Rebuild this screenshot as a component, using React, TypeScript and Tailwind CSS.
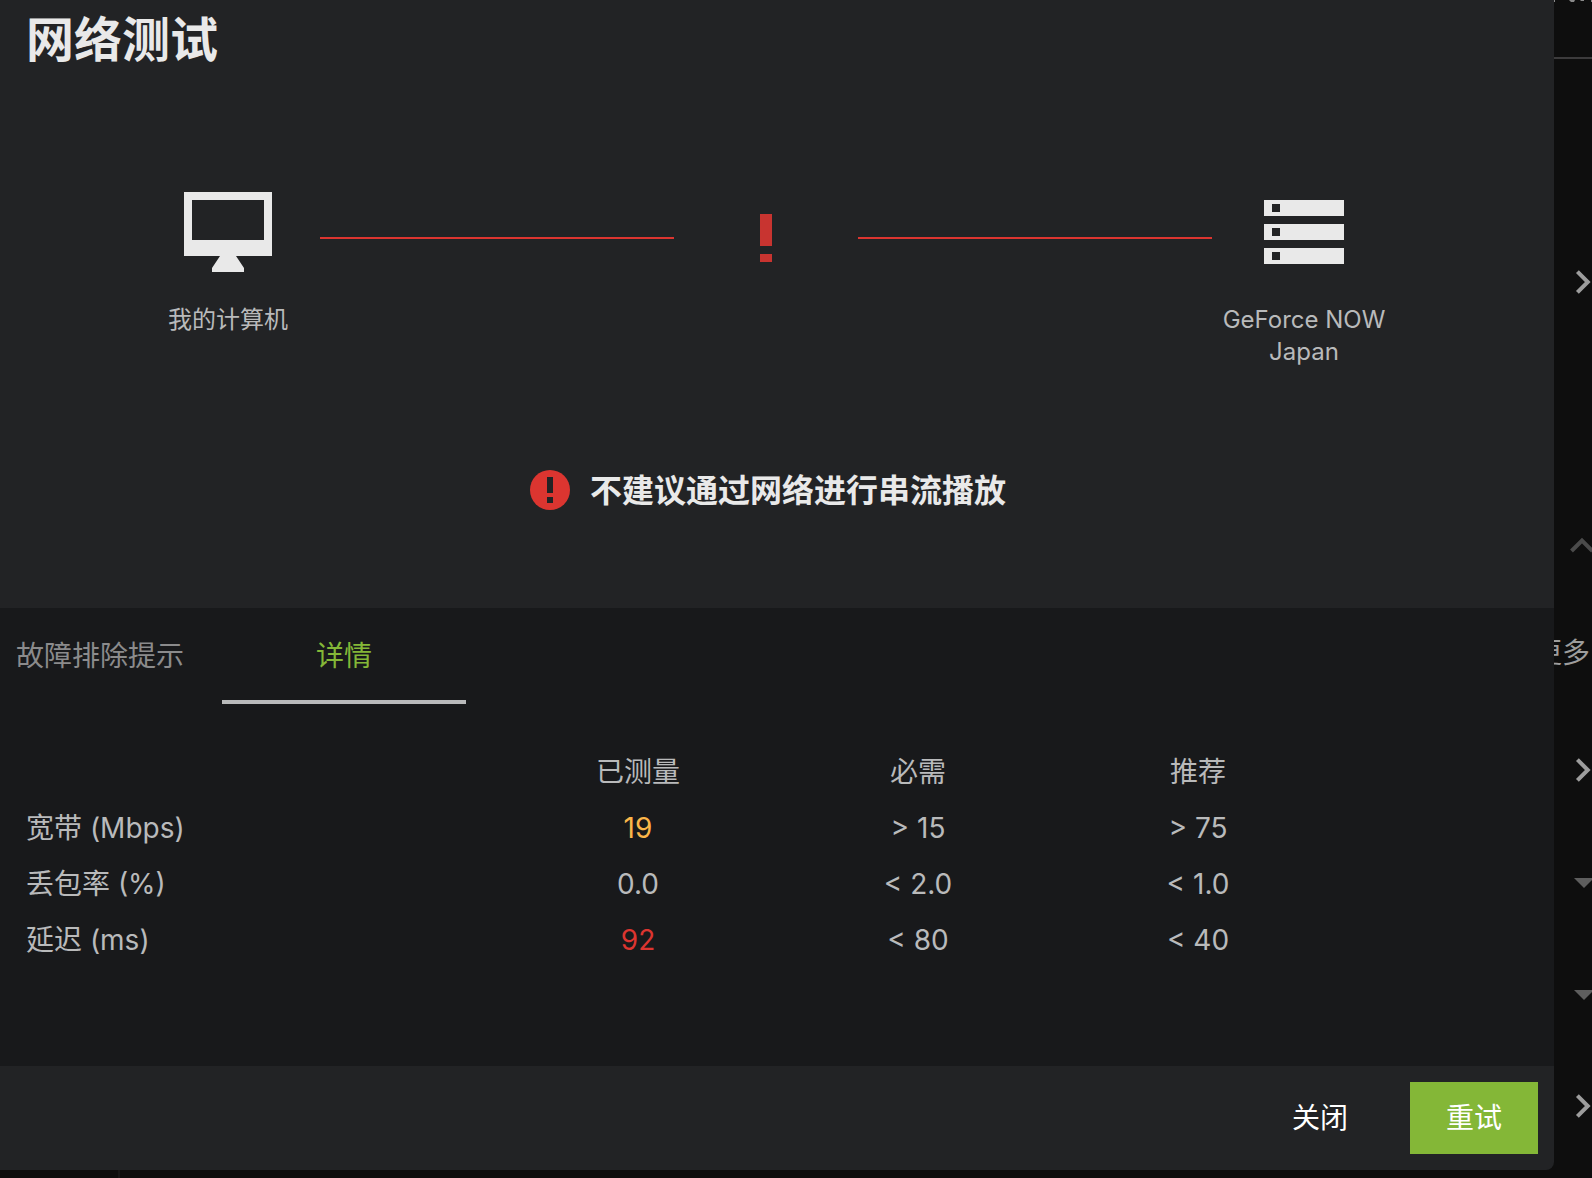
import React from "react";

const metrics = [
  { label: "宽带 (Mbps)", value: "19", tone: "text-[#fbb649]", required: "> 15", recommended: "> 75" },
  { label: "丢包率 (%)", value: "0.0", tone: "", required: "< 2.0", recommended: "< 1.0" },
  { label: "延迟 (ms)", value: "92", tone: "text-[#dc3530]", required: "< 80", recommended: "< 40" },
];

function ComputerIcon() {
  return (
    <svg width="88" height="80" viewBox="0 0 88 80" fill="currentColor" aria-hidden="true">
      <path fillRule="evenodd" d="M0 0H88V64H52L60 76V80H28V76L36 64H0ZM8 8V48H80V8Z" />
    </svg>
  );
}

function ServerIcon() {
  return (
    <svg width="80" height="64" viewBox="0 0 80 64" fill="currentColor" aria-hidden="true">
      <path
        fillRule="evenodd"
        d="M0 0H80V16H0ZM8 4V12H16V4ZM0 24H80V40H0ZM8 28V36H16V28ZM0 48H80V64H0ZM8 52V60H16V52Z"
      />
    </svg>
  );
}

function ChevronRight() {
  return (
    <svg className="h-6 w-4 shrink-0 text-[#9d9d9d]" viewBox="0 0 16 24" fill="none" stroke="currentColor" strokeWidth="4" aria-hidden="true">
      <path d="M2.4 1.6L12.8 12L2.4 22.4" />
    </svg>
  );
}

function Caret() {
  return (
    <svg className="h-[10px] w-5 shrink-0 text-[#5e5e5e]" viewBox="0 0 20 10" fill="currentColor" aria-hidden="true">
      <path d="M0 0H20L10 10Z" />
    </svg>
  );
}

function SettingsEdge() {
  return (
    <aside className="flex w-[38px] shrink-0 flex-col items-start overflow-hidden">
      <div className="h-[59px] w-full border-b-2 border-[#3c3b3c]">
        <svg className="h-[2px] w-[38px]" viewBox="0 0 38 2" fill="#8a8a8a" aria-hidden="true">
          <path d="M0 0H1V2H0ZM15 0H21L20 2H17ZM26 0H30V1H27ZM37 0H38V2H37Z" />
        </svg>
      </div>
      <button type="button" aria-label="展开" className="mt-[211px] ml-[21px] h-6">
        <ChevronRight />
      </button>
      <svg className="mt-[243px] ml-4 h-4 w-6 shrink-0 text-[#4b4b4b]" viewBox="0 0 24 16" fill="none" stroke="currentColor" strokeWidth="4" aria-hidden="true">
        <path d="M1.5 14L12 3.5L22.5 14" />
      </svg>
      <div className="mt-[80px] flex h-10 w-full items-center justify-end pr-[2px] text-[28px] leading-10 whitespace-nowrap text-[#9d9d9d]">
        更多
      </div>
      <button type="button" aria-label="展开" className="mt-[85px] ml-[21px] h-6">
        <ChevronRight />
      </button>
      <div className="mt-24 ml-5 h-[10px]">
        <Caret />
      </div>
      <div className="mt-[102px] ml-5 h-[10px]">
        <Caret />
      </div>
      <button type="button" aria-label="展开" className="mt-[94px] ml-[21px] h-6">
        <ChevronRight />
      </button>
    </aside>
  );
}

export default function App() {
  return (
    <div className="flex min-h-screen flex-col overflow-hidden bg-[#0e0e0e] font-['Inter','Noto_Sans_CJK_SC',sans-serif] text-[#b9babb]">
      <div className="flex grow">
        <main role="dialog" aria-labelledby="title" className="flex min-w-0 grow flex-col overflow-hidden rounded-br-lg bg-[#222325]">
          <header className="px-[26px] pt-1">
            <h1 id="title" className="text-5xl leading-[72px] font-bold text-[#e9e9e9]">
              网络测试
            </h1>
          </header>

          <section className="mt-[116px] mr-[22px] flex items-start px-[136px] text-center text-2xl leading-8">
            <div className="flex w-[184px] shrink-0 flex-col items-center">
              <div className="flex h-20 items-center text-[#e9e9e9]">
                <ComputerIcon />
              </div>
              <p className="mt-8">我的计算机</p>
            </div>
            <div className="mt-[45px] h-[2px] grow bg-[#dc3530]" />
            <div className="flex w-[184px] shrink-0 flex-col items-center gap-2 pt-[22px]">
              <span className="h-8 w-3 bg-[#c83430]" />
              <span className="h-2 w-3 bg-[#c83430]" />
            </div>
            <div className="mt-[45px] h-[2px] grow bg-[#dc3530]" />
            <div className="flex w-[184px] shrink-0 flex-col items-center">
              <div className="flex h-20 items-center text-[#e9e9e9]">
                <ServerIcon />
              </div>
              <p className="mt-8 px-2">
                GeForce NOW
                <br />
                Japan
              </p>
            </div>
          </section>

          <p className="mt-[97px] mr-[18px] flex items-center justify-center gap-5 text-[32px] leading-12 font-bold text-[#e9e9e9]">
            <svg className="size-10" viewBox="0 0 40 40" aria-hidden="true">
              <circle cx="20" cy="20" r="20" fill="#dc3530" />
              <path d="M17 7H23V23H17ZM17 27H23V33H17Z" fill="#222325" />
            </svg>
            <span className="pt-[2px]">不建议通过网络进行串流播放</span>
          </p>

          <section className="mt-[93px] grow bg-[#18191b] text-[28px] leading-10">
            <div role="tablist" className="flex">
              <button type="button" role="tab" aria-selected="false" className="h-24 w-[222px] border-b-4 border-transparent pt-1 pl-4 text-left whitespace-nowrap text-[#8b8b8c]">
                故障排除提示
              </button>
              <button type="button" role="tab" aria-selected="true" className="h-24 w-[244px] border-b-4 border-[#b9babb] pt-1 text-[#84b737]">
                详情
              </button>
            </div>
            <div className="mt-10 pr-[216px]">
              <table className="w-full table-fixed text-center">
                <thead>
                  <tr className="h-14">
                    <td className="w-[498px]" />
                    <th scope="col" className="font-normal">已测量</th>
                    <th scope="col" className="font-normal">必需</th>
                    <th scope="col" className="font-normal">推荐</th>
                  </tr>
                </thead>
                <tbody>
                  {metrics.map((m) => (
                    <tr key={m.label} className="h-14">
                      <th scope="row" className="pl-[26px] text-left font-normal">{m.label}</th>
                      <td className={m.tone}>{m.value}</td>
                      <td>{m.required}</td>
                      <td>{m.recommended}</td>
                    </tr>
                  ))}
                </tbody>
              </table>
            </div>
          </section>

          <footer className="flex justify-end gap-[26px] p-4 text-[28px] leading-10 text-white">
            <button type="button" className="h-[72px] px-9">关闭</button>
            <button type="button" className="h-[72px] bg-[#84b737] px-9">重试</button>
          </footer>
        </main>
        <SettingsEdge />
      </div>
      <div className="h-2 pl-[118px]">
        <div className="h-2 w-[2px] bg-[#171717]" />
      </div>
    </div>
  );
}
